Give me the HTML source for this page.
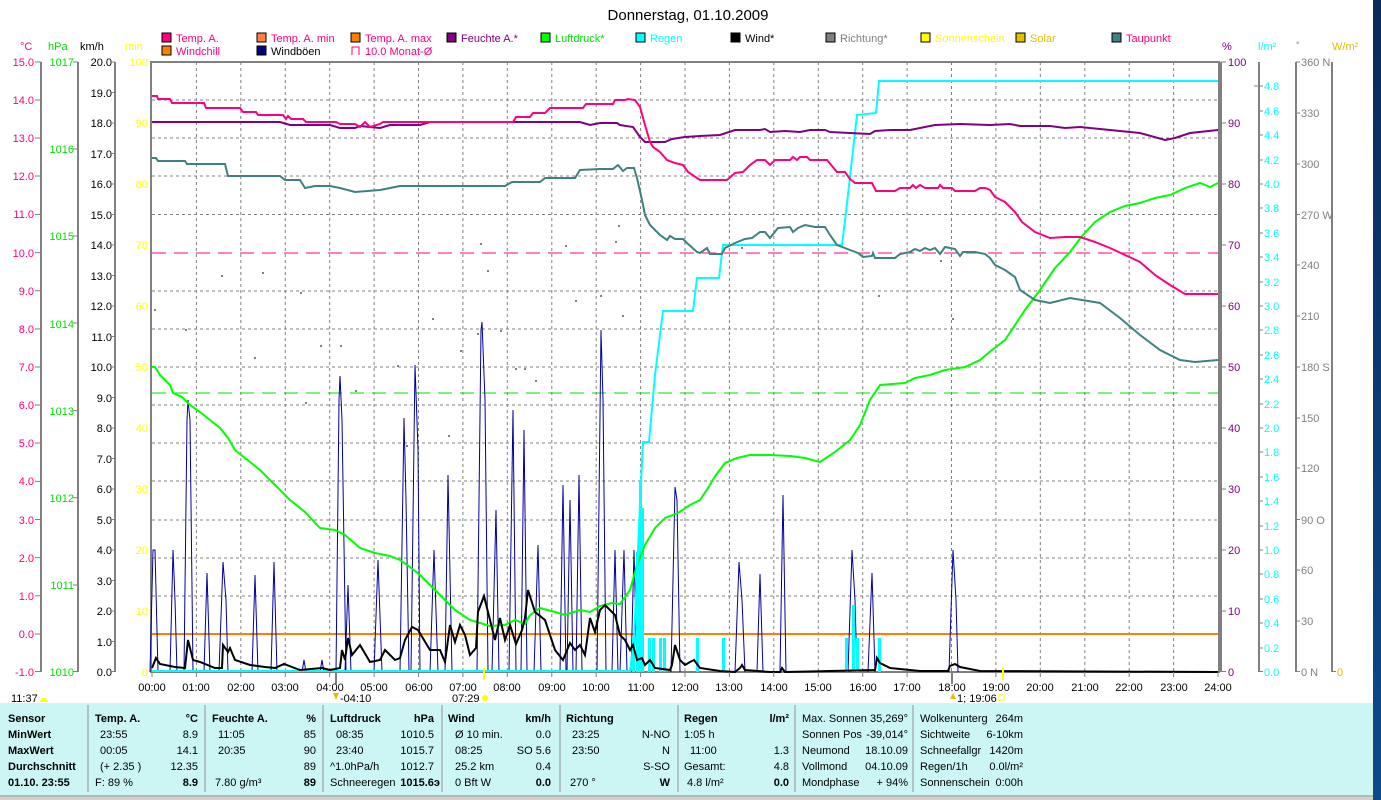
<!DOCTYPE html>
<html><head><meta charset="utf-8"><style>
html,body{margin:0;padding:0;background:#fff;width:1381px;height:800px;overflow:hidden}
svg{display:block;font-family:"Liberation Sans",sans-serif;font-size:11px}
.b{font-weight:bold}
</style></head><body>
<svg width="1381" height="800" viewBox="0 0 1381 800" xmlns="http://www.w3.org/2000/svg">
<rect x="0" y="0" width="1381" height="800" fill="#fff"/>
<defs><linearGradient id="bl" x1="0" y1="0" x2="0" y2="1"><stop offset="0" stop-color="#0a2a5a"/><stop offset="1" stop-color="#0d4a8a"/></linearGradient></defs>
<rect x="1373" y="0" width="8" height="800" fill="url(#bl)"/>
<text x="688" y="20" font-size="15" text-anchor="middle">Donnerstag, 01.10.2009</text>

<!-- legend -->
<g font-size="11" stroke-width="1">
<rect x="162" y="33" width="9" height="9" fill="#ff0080" stroke="#000"/><text x="176" y="42" fill="#ff0080">Temp. A.</text>
<rect x="257" y="33" width="9" height="9" fill="#ff8040" stroke="#000"/><text x="271" y="42" fill="#ff0080">Temp. A. min</text>
<rect x="351" y="33" width="9" height="9" fill="#ff8000" stroke="#000"/><text x="365" y="42" fill="#ff0080">Temp. A. max</text>
<rect x="447" y="33" width="9" height="9" fill="#800080" stroke="#000"/><text x="461" y="42" fill="#800080">Feuchte A.*</text>
<rect x="541" y="33" width="9" height="9" fill="#00ff00" stroke="#000"/><text x="555" y="42" fill="#00e000">Luftdruck*</text>
<rect x="636" y="33" width="9" height="9" fill="#00ffff" stroke="#000"/><text x="650" y="42" fill="#00ffff">Regen</text>
<rect x="731" y="33" width="9" height="9" fill="#000" stroke="#000"/><text x="745" y="42" fill="#000">Wind*</text>
<rect x="826" y="33" width="9" height="9" fill="#808080" stroke="#000"/><text x="840" y="42" fill="#808080">Richtung*</text>
<rect x="921" y="33" width="9" height="9" fill="#ffff00" stroke="#000"/><text x="935" y="42" fill="#ffff00">Sonnenschein</text>
<rect x="1016" y="33" width="9" height="9" fill="#e0c000" stroke="#000"/><text x="1030" y="42" fill="#e0c000">Solar</text>
<rect x="1112" y="33" width="9" height="9" fill="#408080" stroke="#000"/><text x="1126" y="42" fill="#ff0080">Taupunkt</text>
<rect x="162" y="46" width="9" height="9" fill="#ff8000" stroke="#000"/><text x="176" y="55" fill="#ff0080">Windchill</text>
<rect x="257" y="46" width="9" height="9" fill="#000080" stroke="#000"/><text x="271" y="55" fill="#000">Windböen</text>
<path d="M352 55V47H359V55" fill="none" stroke="#ff0080"/><text x="365" y="55" fill="#ff0080">10.0 Monat-Ø</text>
</g>

<!-- axis headers -->
<text x="20" y="50" fill="#ff0080">°C</text>
<text x="48" y="50" fill="#00e000">hPa</text>
<text x="80" y="50" fill="#000">km/h</text>
<text x="125" y="50" fill="#ffff00">min</text>
<text x="1222" y="50" fill="#800080">%</text>
<text x="1258" y="50" fill="#00ffff">l/m²</text>
<text x="1296" y="48" fill="#808080" font-size="9">°</text>
<text x="1332" y="50" fill="#e0c000">W/m²</text>

<!-- left axis lines -->
<g stroke="#808080" stroke-width="2">
<line x1="41" y1="62" x2="41" y2="672"/><line x1="78" y1="62" x2="78" y2="672"/><line x1="115" y1="62" x2="115" y2="672"/>
<line x1="1259" y1="62" x2="1259" y2="672"/><line x1="1296" y1="62" x2="1296" y2="672"/><line x1="1332" y1="62" x2="1332" y2="672"/>
</g>

<!-- °C labels -->
<g fill="#ff0080" text-anchor="end">
<text x="34" y="66">15.0</text><text x="34" y="104">14.0</text><text x="34" y="142">13.0</text><text x="34" y="180">12.0</text><text x="34" y="218">11.0</text><text x="34" y="257">10.0</text><text x="34" y="295">9.0</text><text x="34" y="333">8.0</text><text x="34" y="371">7.0</text><text x="34" y="409">6.0</text><text x="34" y="447">5.0</text><text x="34" y="485">4.0</text><text x="34" y="524">3.0</text><text x="34" y="562">2.0</text><text x="34" y="600">1.0</text><text x="34" y="638">0.0</text><text x="34" y="676">-1.0</text>
</g>
<path stroke="#808080" d="M35 62H41M35 100H41M35 138H41M35 176H41M35 214.5H41M35 252.6H41M35 290.8H41M35 329H41M35 367H41M35 405H41M35 443H41M35 481.4H41M35 519.5H41M35 557.6H41M35 595.8H41M35 634H41M35 671.5H41"/>
<g fill="#00e000" text-anchor="end">
<text x="74" y="66">1017</text><text x="74" y="153">1016</text><text x="74" y="240">1015</text><text x="74" y="328">1014</text><text x="74" y="415">1013</text><text x="74" y="502">1012</text><text x="74" y="589">1011</text><text x="74" y="676">1010</text>
</g>
<path stroke="#808080" d="M73 62H78M73 149H78M73 236H78M73 323H78M73 410.6H78M73 497.7H78M73 585H78M73 671.5H78"/>
<g fill="#000" text-anchor="end">
<text x="112" y="66">20.0</text><text x="112" y="97">19.0</text><text x="112" y="127">18.0</text><text x="112" y="158">17.0</text><text x="112" y="188">16.0</text><text x="112" y="219">15.0</text><text x="112" y="249">14.0</text><text x="112" y="280">13.0</text><text x="112" y="310">12.0</text><text x="112" y="341">11.0</text><text x="112" y="371">10.0</text><text x="112" y="402">9.0</text><text x="112" y="432">8.0</text><text x="112" y="463">7.0</text><text x="112" y="493">6.0</text><text x="112" y="524">5.0</text><text x="112" y="554">4.0</text><text x="112" y="585">3.0</text><text x="112" y="615">2.0</text><text x="112" y="646">1.0</text><text x="112" y="676">0.0</text>
</g>
<path stroke="#808080" d="M111 62H115M111 92.5H115M111 123H115M111 153.5H115M111 184H115M111 214.5H115M111 245H115M111 275.5H115M111 306H115M111 336.5H115M111 367H115M111 397.5H115M111 428H115M111 458.5H115M111 489H115M111 519.5H115M111 550H115M111 580.5H115M111 611H115M111 641.5H115M111 671.5H115"/>
<g fill="#ffff00" text-anchor="end">
<text x="148" y="66">100</text><text x="148" y="127">90</text><text x="148" y="188">80</text><text x="148" y="249">70</text><text x="148" y="310">60</text><text x="148" y="371">50</text><text x="148" y="432">40</text><text x="148" y="493">30</text><text x="148" y="554">20</text><text x="148" y="615">10</text><text x="148" y="676">0</text>
</g>
<!-- right labels -->
<g fill="#800080">
<text x="1228" y="66">100</text><text x="1228" y="127">90</text><text x="1228" y="188">80</text><text x="1228" y="249">70</text><text x="1228" y="310">60</text><text x="1228" y="371">50</text><text x="1228" y="432">40</text><text x="1228" y="493">30</text><text x="1228" y="554">20</text><text x="1228" y="615">10</text><text x="1228" y="676">0</text>
</g>
<path stroke="#808080" d="M1221 62H1226M1221 123H1226M1221 184H1226M1221 245H1226M1221 306H1226M1221 367H1226M1221 428H1226M1221 489H1226M1221 550H1226M1221 611H1226M1221 671.5H1226"/>
<g fill="#00ffff">
<text x="1264" y="90">4.8</text><text x="1264" y="115">4.6</text><text x="1264" y="139">4.4</text><text x="1264" y="164">4.2</text><text x="1264" y="188">4.0</text><text x="1264" y="212">3.8</text><text x="1264" y="237">3.6</text><text x="1264" y="261">3.4</text><text x="1264" y="286">3.2</text><text x="1264" y="310">3.0</text><text x="1264" y="334">2.8</text><text x="1264" y="359">2.6</text><text x="1264" y="383">2.4</text><text x="1264" y="408">2.2</text><text x="1264" y="432">2.0</text><text x="1264" y="456">1.8</text><text x="1264" y="481">1.6</text><text x="1264" y="505">1.4</text><text x="1264" y="530">1.2</text><text x="1264" y="554">1.0</text><text x="1264" y="578">0.8</text><text x="1264" y="603">0.6</text><text x="1264" y="627">0.4</text><text x="1264" y="652">0.2</text><text x="1264" y="676">0.0</text>
</g>
<path stroke="#808080" d="M1254 86H1263M1259 111H1263M1259 135H1263M1259 160H1263M1259 184H1263M1259 208H1263M1259 233H1263M1259 257H1263M1259 282H1263M1259 306H1263M1259 330H1263M1259 355H1263M1259 379H1263M1259 404H1263M1259 428H1263M1259 452H1263M1259 477H1263M1259 501H1263M1259 526H1263M1259 550H1263M1259 574H1263M1259 599H1263M1259 623H1263M1259 648H1263M1259 671.5H1263"/>
<g fill="#808080">
<text x="1301" y="66">360 N</text><text x="1301" y="117">330</text><text x="1301" y="168">300</text><text x="1301" y="219">270 W</text><text x="1301" y="269">240</text><text x="1301" y="320">210</text><text x="1301" y="371">180 S</text><text x="1301" y="422">150</text><text x="1301" y="472">120</text><text x="1301" y="524">90  O</text><text x="1301" y="574">60</text><text x="1301" y="625">30</text><text x="1301" y="676">0   N</text>
</g>
<path stroke="#808080" d="M1296 62H1300M1296 113H1300M1296 164H1300M1296 214.5H1300M1296 265H1300M1296 316H1300M1296 367H1300M1296 418H1300M1296 468H1300M1296 519.5H1300M1296 570H1300M1296 621H1300M1296 671.5H1300M1332 671.5H1336"/>
<text x="1337" y="676" fill="#e0c000">0</text>

<!-- grid -->
<g stroke="#808080" stroke-dasharray="3,3" stroke-width="1">
<path d="M196.4 62V672M240.8 62V672M285.3 62V672M329.7 62V672M374.1 62V672M418.5 62V672M462.9 62V672M507.3 62V672M551.8 62V672M596.2 62V672M640.6 62V672M685 62V672M729.4 62V672M773.8 62V672M818.3 62V672M862.7 62V672M907.1 62V672M951.5 62V672M995.9 62V672M1040.3 62V672M1084.8 62V672M1129.2 62V672M1173.6 62V672"/>
<path d="M152 100H1218M152 138H1218M152 176H1218M152 214.5H1218M152 291H1218M152 329H1218M152 367H1218M152 405H1218M152 443H1218M152 481H1218M152 520H1218M152 558H1218M152 596H1218"/>
</g>
<line x1="152" y1="253" x2="1218" y2="253" stroke="#ff0080" stroke-dasharray="14,8"/>
<line x1="152" y1="393" x2="1218" y2="393" stroke="#00e000" stroke-dasharray="14,8"/>

<!-- frame -->
<rect x="151" y="62" width="1068" height="610" fill="none" stroke="#808080" stroke-width="2"/>
<line x1="1221" y1="62" x2="1221" y2="672" stroke="#808080" stroke-width="2"/>

<!-- direction dots -->
<g fill="#808080">
<rect x="154" y="309" width="2" height="2"/><rect x="185" y="329" width="2" height="2"/><rect x="221" y="275" width="2" height="2"/><rect x="254" y="357" width="2" height="2"/><rect x="262" y="272" width="2" height="2"/><rect x="300" y="292" width="2" height="2"/><rect x="305" y="402" width="2" height="2"/><rect x="320" y="345" width="2" height="2"/><rect x="340" y="345" width="2" height="2"/><rect x="355" y="390" width="2" height="2"/><rect x="397" y="365" width="2" height="2"/><rect x="406" y="445" width="2" height="2"/><rect x="432" y="318" width="2" height="2"/><rect x="448" y="435" width="2" height="2"/><rect x="460" y="350" width="2" height="2"/><rect x="477" y="333" width="2" height="2"/><rect x="480" y="243" width="2" height="2"/><rect x="487" y="270" width="2" height="2"/><rect x="500" y="330" width="2" height="2"/><rect x="515" y="368" width="2" height="2"/><rect x="524" y="368" width="2" height="2"/><rect x="535" y="380" width="2" height="2"/><rect x="565" y="245" width="2" height="2"/><rect x="575" y="300" width="2" height="2"/><rect x="600" y="295" width="2" height="2"/><rect x="618" y="225" width="2" height="2"/><rect x="615" y="241" width="2" height="2"/><rect x="622" y="315" width="2" height="2"/><rect x="741" y="247" width="2" height="2"/><rect x="878" y="295" width="2" height="2"/><rect x="940" y="260" width="2" height="2"/><rect x="952" y="318" width="2" height="2"/>
</g>

<!-- orange line -->
<line x1="152" y1="634" x2="1218" y2="634" stroke="#ff8000" stroke-width="2"/>

<!-- gusts -->
<g fill="none" stroke="#0000a0" stroke-width="1">
<path d="M150 672L153 550L155 550L158 672M170 672L173 550L175 600L177 672M184 672L187 420L188 400L190 420L193 672M204 672L207 573L210 672M219 672L223 562L226 600L228 672M252 672L255 575L258 672M271 672L274 562L277 672M302 672L304 660L306 672M320 672L322 660L324 672M336 672L339 400L340 376L342 420L346 672M345 672L348 585L351 672M374 672L378 560L382 672M400 672L404 418L406 500L409 672M411 672L415 365L418 450L420 672M430 672L434 550L438 672M445 672L448 475L452 672M477 672L481 330L482 322L485 400L488 672M492 672L496 510L499 672M509 672L513 410L516 672M521 672L524 430L527 672M534 672L538 545L541 672M560 672L563 485L566 672M567 672L570 500L573 672M576 672L579 475L582 672M597 672L601 330L603 400L606 672M612 672L615 550L618 672M620 672L624 550L627 672M631 672L634 550L637 672M671 672L675 487L677 500L680 672M735 672L739 562L742 600L745 672M757 672L760 574L763 672M780 672L783 495L786 672M848 672L852 550L855 600L857 672M868 672L872 573L875 672M949 672L953 550L956 600L958 672"/>
</g>

<!-- rain bars -->
<g fill="#00ffff">
<rect x="632" y="638" width="3" height="34"/><rect x="636" y="552" width="3" height="120"/><rect x="639" y="480" width="3" height="192"/><rect x="642" y="508" width="2" height="164"/><rect x="648" y="638" width="3" height="34"/><rect x="652" y="638" width="3" height="34"/><rect x="659" y="638" width="3" height="34"/><rect x="663" y="638" width="3" height="34"/><rect x="696" y="638" width="3" height="34"/><rect x="722" y="638" width="3" height="34"/><rect x="845" y="638" width="3" height="34"/><rect x="852" y="605" width="3" height="67"/><rect x="856" y="638" width="3" height="34"/><rect x="878" y="638" width="3" height="34"/>
</g>

<!-- pressure -->
<polyline fill="none" stroke="#00ff00" stroke-width="2" points="152,367 155,367 160,375 170,385 173,393 182,397 190,405 200,412 210,420 220,428 228,438 235,450 245,458 260,470 275,485 290,500 305,512 320,528 335,530 345,535 360,548 375,553 390,556 400,560 410,567 420,575 430,585 445,600 455,610 470,620 490,626 505,625 515,620 525,624 530,615 540,608 555,612 565,615 580,610 590,612 600,606 612,603 620,604 630,590 637,565 645,545 655,528 665,518 678,513 690,505 700,500 708,488 716,475 725,463 737,458 750,455 770,455 790,456 805,458 820,462 835,452 850,440 860,425 870,400 880,385 905,383 915,378 930,375 945,370 965,367 980,360 992,350 1005,340 1015,325 1025,310 1040,290 1055,268 1070,252 1082,236 1095,222 1110,212 1125,206 1140,203 1155,198 1170,195 1185,188 1200,183 1210,187 1218,183"/>

<!-- rain sum -->
<polyline fill="none" stroke="#00ffff" stroke-width="2" points="152,671 630,671 634,640 640,505 643,442 649,442 655,375 663,311 693,311 697,278 719,278 723,245 842,245 846,212 857,115 876,113 879,81 1218,81"/>

<!-- humidity -->
<polyline fill="none" stroke="#800080" stroke-width="2" points="152,122 280,122 290,125 330,125 340,128 355,128 360,126 380,128 390,125 420,125 430,122 580,122 590,125 600,123 617,123 620,125 633,127 640,137 645,142 665,142 672,139 685,137 700,136 720,135 735,130 760,130 765,129 770,132 785,131 800,132 810,130 825,130 830,132 850,133 870,134 875,131 890,130 910,130 920,128 935,125 960,124 990,125 1010,124 1020,126 1050,126 1065,128 1080,127 1110,130 1140,133 1165,140 1175,138 1190,133 1218,130"/>

<!-- temp -->
<polyline fill="none" stroke="#ff0080" stroke-width="2" points="152,96 157,96 158,99 170,99 172,103 204,103 206,108 240,108 243,112 256,112 258,115 283,115 286,119 288,116 291,119 303,119 306,122 336,122 340,124 355,124 360,127 365,122 370,127 380,124 383,122 513,122 516,117 530,117 533,113 545,113 550,108 583,108 586,104 600,104 613,104 615,100 625,100 628,99 635,100 640,107 645,125 650,142 653,147 660,152 667,160 675,163 683,165 688,172 697,178 700,180 727,180 735,173 743,172 750,165 757,160 765,160 770,165 775,160 790,160 793,157 797,160 800,157 807,157 810,160 827,160 837,172 845,172 850,179 855,183 872,183 876,191 895,191 900,188 910,188 913,185 916,188 920,185 925,188 938,188 940,185 943,188 952,188 955,191 975,191 980,188 985,188 990,190 995,197 1005,202 1015,212 1022,222 1035,232 1050,238 1065,237 1080,237 1095,242 1110,248 1125,255 1140,262 1155,275 1170,285 1185,294 1218,294"/>

<!-- dew point -->
<polyline fill="none" stroke="#408080" stroke-width="2" points="152,158 156,158 158,161 185,161 187,164 225,164 228,176 280,176 285,180 300,180 305,188 315,186 330,186 340,188 355,192 380,190 400,186 505,186 512,182 540,182 545,178 575,178 580,170 600,169 613,169 618,165 623,171 627,168 634,168 637,178 642,200 645,215 650,225 660,235 667,240 670,236 675,239 683,239 687,243 697,252 700,253 707,248 710,254 722,254 725,248 735,243 745,239 752,238 760,232 765,232 770,238 778,228 790,227 793,232 798,228 805,225 815,227 825,227 830,235 837,245 850,250 858,253 863,257 872,256 873,253 875,258 895,258 900,254 910,252 915,249 920,251 925,248 930,250 935,248 940,254 945,247 955,249 960,256 963,252 975,252 985,254 990,258 995,265 1005,270 1015,277 1020,290 1035,300 1050,303 1070,298 1100,303 1120,318 1140,335 1160,350 1180,360 1195,362 1218,360"/>

<!-- wind -->
<polyline fill="none" stroke="#000" stroke-width="2" points="152,668 156,658 160,664 175,667 185,668 188,640 193,660 200,662 215,668 222,668 223,645 228,652 230,648 235,660 250,665 265,667 275,668 284,664 292,667 300,670 322,668 330,670 340,668 342,650 345,660 348,638 352,655 360,645 370,662 380,660 385,650 395,660 400,658 405,640 412,627 418,630 430,650 440,650 445,662 450,625 455,642 460,625 465,635 470,655 476,648 478,612 484,596 490,620 495,640 500,618 505,640 510,625 516,644 522,630 525,618 528,590 535,612 545,620 550,635 555,650 563,660 570,643 575,650 580,645 585,655 590,618 595,632 600,610 605,605 615,615 620,635 625,640 630,650 633,645 637,660 642,658 645,665 650,660 655,668 670,670 672,665 675,645 680,660 685,665 690,662 694,660 700,668 720,671 735,672 740,668 742,665 745,670 770,672 780,672 782,668 785,672 875,670 877,658 880,663 890,668 920,671 948,671 950,666 955,664 960,667 980,671 1218,672"/>

<!-- x axis ticks & labels -->
<path stroke="#808080" d="M152 672V677M196.4 672V677M240.8 672V677M285.3 672V677M329.7 672V677M374.1 672V677M418.5 672V677M462.9 672V677M507.3 672V677M551.8 672V677M596.2 672V677M640.6 672V677M685 672V677M729.4 672V677M773.8 672V677M818.3 672V677M862.7 672V677M907.1 672V677M951.5 672V677M995.9 672V677M1040.3 672V677M1084.8 672V677M1129.2 672V677M1173.6 672V677M1218 672V677"/>
<line x1="336" y1="672" x2="336" y2="684" stroke="#808080" stroke-width="2"/>
<line x1="952" y1="672" x2="952" y2="684" stroke="#808080" stroke-width="2"/>
<line x1="484" y1="668" x2="484" y2="680" stroke="#ffff00" stroke-width="2"/>
<line x1="1003" y1="668" x2="1003" y2="680" stroke="#ffff00" stroke-width="2"/>
<g text-anchor="middle" fill="#000">
<text x="152" y="691">00:00</text><text x="196" y="691">01:00</text><text x="241" y="691">02:00</text><text x="285" y="691">03:00</text><text x="330" y="691">04:00</text><text x="374" y="691">05:00</text><text x="419" y="691">06:00</text><text x="463" y="691">07:00</text><text x="507" y="691">08:00</text><text x="552" y="691">09:00</text><text x="596" y="691">10:00</text><text x="641" y="691">11:00</text><text x="685" y="691">12:00</text><text x="729" y="691">13:00</text><text x="774" y="691">14:00</text><text x="818" y="691">15:00</text><text x="863" y="691">16:00</text><text x="907" y="691">17:00</text><text x="952" y="691">18:00</text><text x="996" y="691">19:00</text><text x="1040" y="691">20:00</text><text x="1085" y="691">21:00</text><text x="1129" y="691">22:00</text><text x="1174" y="691">23:00</text><text x="1218" y="691">24:00</text>
</g>
<text x="11" y="702">11:37</text><path d="M40 702A4 4 0 0 1 48 702Z" fill="#ffff00"/>
<path d="M333 693L339 693L336 700Z" fill="#e0c000"/><text x="340" y="702">-04:10</text>
<text x="452" y="702">07:29</text><circle cx="485" cy="698" r="3" fill="#ffff00"/>
<path d="M950 699L953 693L956 699Z" fill="#e0c000"/><text x="957" y="702">1; 19:06</text><rect x="999" y="695" width="5" height="5" fill="none" stroke="#ffff00"/>

<!-- table -->
<rect x="0" y="703" width="1373" height="92" fill="#cbf6f4"/>
<rect x="0" y="795" width="1373" height="5" fill="#d4d0c8"/>
<line x1="0" y1="796" x2="1373" y2="796" stroke="#a0a0a0"/>
<g stroke="#909090">
<line x1="88" y1="705" x2="88" y2="792"/><line x1="205" y1="705" x2="205" y2="792"/><line x1="323" y1="705" x2="323" y2="792"/><line x1="442" y1="705" x2="442" y2="792"/><line x1="560" y1="705" x2="560" y2="792"/><line x1="678" y1="705" x2="678" y2="792"/><line x1="795" y1="705" x2="795" y2="792"/><line x1="913" y1="705" x2="913" y2="792"/>
</g>
<g fill="#000" font-size="11">
<text x="8" y="722" class="b">Sensor</text><text x="8" y="738" class="b">MinWert</text><text x="8" y="754" class="b">MaxWert</text><text x="8" y="770" class="b">Durchschnitt</text><text x="8" y="786" class="b">01.10. 23:55</text>

<text x="95" y="722" class="b">Temp. A.</text><text x="198" y="722" class="b" text-anchor="end">°C</text>
<text x="100" y="738">23:55</text><text x="198" y="738" text-anchor="end">8.9</text>
<text x="100" y="754">00:05</text><text x="198" y="754" text-anchor="end">14.1</text>
<text x="100" y="770">(+ 2.35 )</text><text x="198" y="770" text-anchor="end">12.35</text>
<text x="95" y="786">F: 89 %</text><text x="198" y="786" class="b" text-anchor="end">8.9</text>

<text x="212" y="722" class="b">Feuchte A.</text><text x="316" y="722" class="b" text-anchor="end">%</text>
<text x="218" y="738">11:05</text><text x="316" y="738" text-anchor="end">85</text>
<text x="218" y="754">20:35</text><text x="316" y="754" text-anchor="end">90</text>
<text x="316" y="770" text-anchor="end">89</text>
<text x="215" y="786">7.80 g/m³</text><text x="316" y="786" class="b" text-anchor="end">89</text>

<text x="330" y="722" class="b">Luftdruck</text><text x="434" y="722" class="b" text-anchor="end">hPa</text>
<text x="336" y="738">08:35</text><text x="434" y="738" text-anchor="end">1010.5</text>
<text x="336" y="754">23:40</text><text x="434" y="754" text-anchor="end">1015.7</text>
<text x="330" y="770">^1.0hPa/h</text><text x="434" y="770" text-anchor="end">1012.7</text>
<text x="330" y="786">Schneeregen</text><text x="440" y="786" class="b" text-anchor="end">1015.6э</text>

<text x="448" y="722" class="b">Wind</text><text x="551" y="722" class="b" text-anchor="end">km/h</text>
<text x="455" y="738">Ø 10 min.</text><text x="551" y="738" text-anchor="end">0.0</text>
<text x="455" y="754">08:25</text><text x="551" y="754" text-anchor="end">SO 5.6</text>
<text x="455" y="770">25.2 km</text><text x="551" y="770" text-anchor="end">0.4</text>
<text x="455" y="786">0 Bft W</text><text x="551" y="786" class="b" text-anchor="end">0.0</text>

<text x="566" y="722" class="b">Richtung</text>
<text x="572" y="738">23:25</text><text x="670" y="738" text-anchor="end">N-NO</text>
<text x="572" y="754">23:50</text><text x="670" y="754" text-anchor="end">N</text>
<text x="670" y="770" text-anchor="end">S-SO</text>
<text x="570" y="786">270 °</text><text x="670" y="786" class="b" text-anchor="end">W</text>

<text x="684" y="722" class="b">Regen</text><text x="789" y="722" class="b" text-anchor="end">l/m²</text>
<text x="684" y="738">1:05 h</text>
<text x="690" y="754">11:00</text><text x="789" y="754" text-anchor="end">1.3</text>
<text x="684" y="770">Gesamt:</text><text x="789" y="770" text-anchor="end">4.8</text>
<text x="687" y="786">4.8 l/m²</text><text x="789" y="786" class="b" text-anchor="end">0.0</text>

<text x="802" y="722">Max. Sonnen</text><text x="908" y="722" text-anchor="end">35,269°</text>
<text x="802" y="738">Sonnen Pos</text><text x="908" y="738" text-anchor="end">-39,014°</text>
<text x="802" y="754">Neumond</text><text x="908" y="754" text-anchor="end">18.10.09</text>
<text x="802" y="770">Vollmond</text><text x="908" y="770" text-anchor="end">04.10.09</text>
<text x="802" y="786">Mondphase</text><text x="908" y="786" text-anchor="end">+ 94%</text>

<text x="920" y="722">Wolkenunterg</text><text x="1023" y="722" text-anchor="end">264m</text>
<text x="920" y="738">Sichtweite</text><text x="1023" y="738" text-anchor="end">6-10km</text>
<text x="920" y="754">Schneefallgr</text><text x="1023" y="754" text-anchor="end">1420m</text>
<text x="920" y="770">Regen/1h</text><text x="1023" y="770" text-anchor="end">0.0l/m²</text>
<text x="920" y="786">Sonnenschein</text><text x="1023" y="786" text-anchor="end">0:00h</text>
</g>
</svg>
</body></html>
